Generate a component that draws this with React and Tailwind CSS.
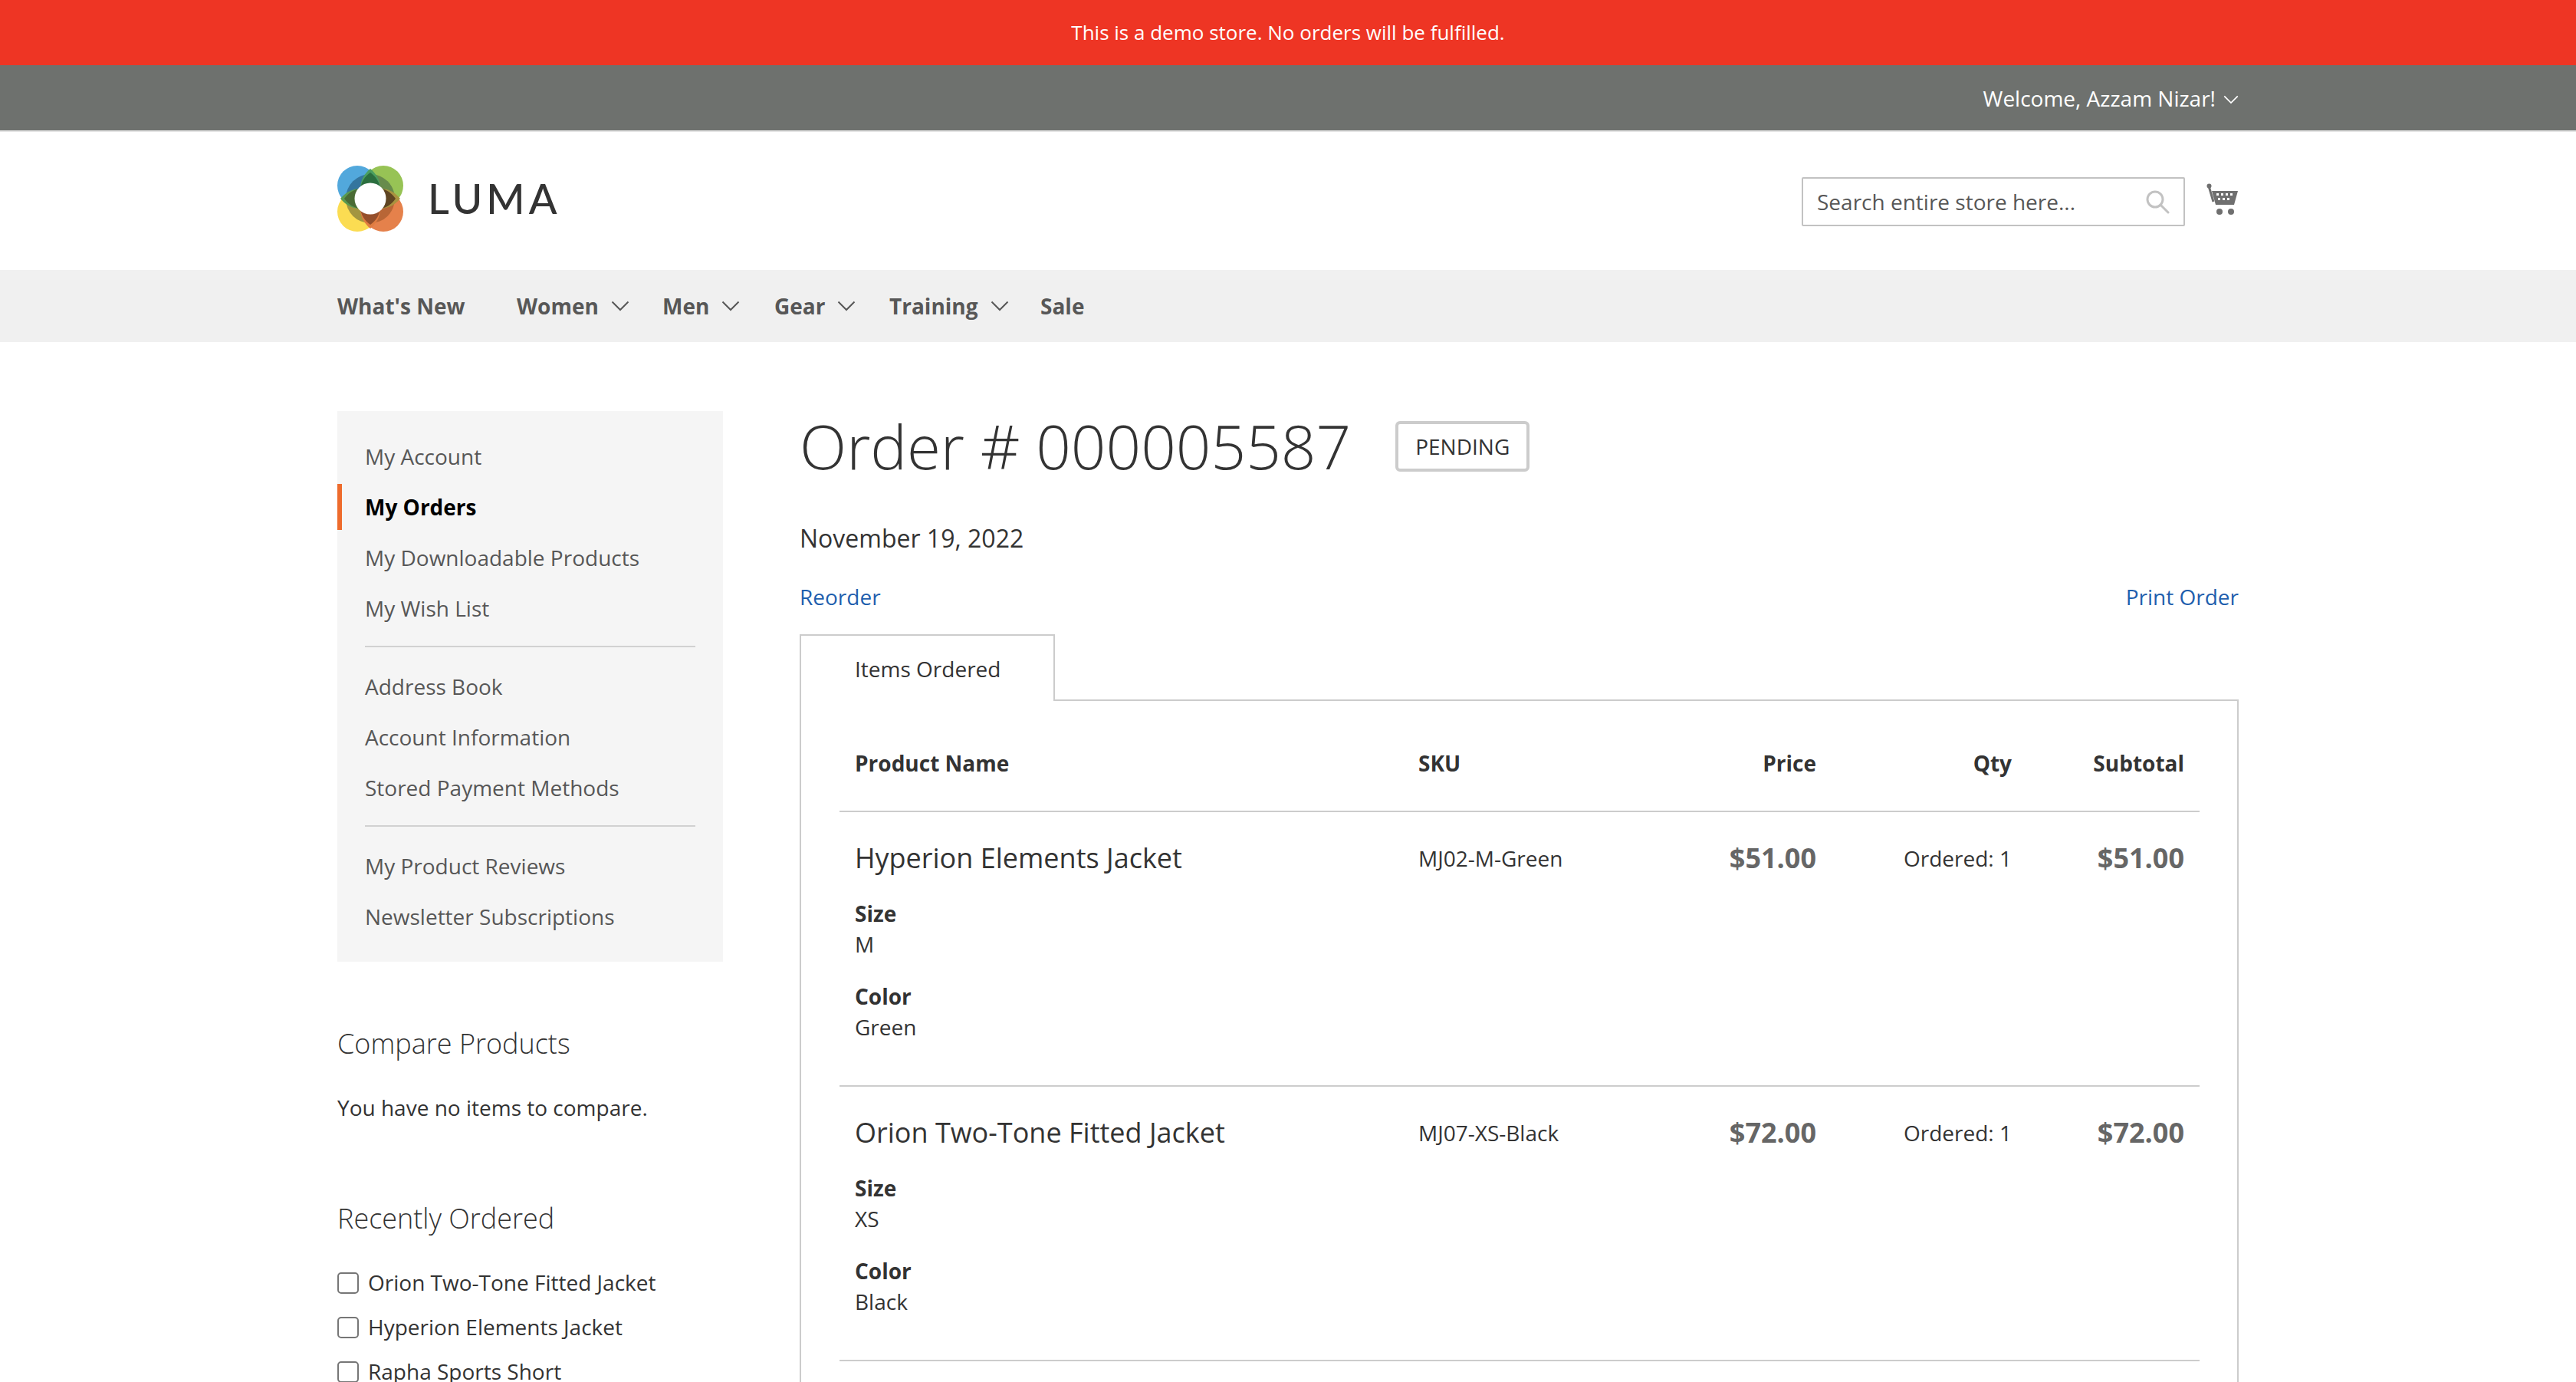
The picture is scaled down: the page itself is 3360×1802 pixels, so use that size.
import React from 'react';

const Chevron = ({ className, color = '#575757' }) => (
  <svg className={className} viewBox="0 0 24 14" fill="none" stroke={color} strokeWidth="2">
    <path d="M1.5 1.5 12 12 22.5 1.5" />
  </svg>
);

const Logo = () => (
  <svg className="w-[86px] h-[86px] shrink-0" viewBox="0 0 86 86">
    <circle cx="26" cy="26" r="26" fill="#52a8dc" />
    <circle cx="60" cy="26" r="26" fill="#97c355" />
    <circle cx="26" cy="60" r="26" fill="#fbdc52" />
    <circle cx="60" cy="60" r="26" fill="#e5814b" />
    <path d="M43 43V11A32 32 0 0 0 11 43Z" fill="#34759e" />
    <path d="M43 43V11A32 32 0 0 1 75 43Z" fill="#678b4c" />
    <path d="M43 43V75A32 32 0 0 1 11 43Z" fill="#a39540" />
    <path d="M43 43V75A32 32 0 0 0 75 43Z" fill="#b86636" />
    <path d="M43 4C36 10 30 18 30 30L43 43 56 30C56 18 50 10 43 4Z" fill="#4a9e60" />
    <path d="M43 9C36 14 30 22 30 32L43 43 56 32C56 22 50 14 43 9Z" fill="#2b6e3f" />
    <path d="M82 43C76 36 68 30 56 30L43 43 56 56C68 56 76 50 82 43Z" fill="#a8923f" />
    <path d="M76 43C71 36 64 30 54 30L43 43 54 56C64 56 71 50 76 43Z" fill="#5f4522" />
    <path d="M43 82C36 76 30 68 30 56L43 43 56 56C56 68 50 76 43 82Z" fill="#e07c40" />
    <path d="M43 77C36 72 30 64 30 54L43 43 56 54C56 64 50 72 43 77Z" fill="#954f2b" />
    <path d="M4 43C10 36 18 30 30 30L43 43 30 56C18 56 10 50 4 43Z" fill="#5a9a50" />
    <path d="M9 43C14 36 22 30 32 30L43 43 32 56C22 56 14 50 9 43Z" fill="#4a6b35" />
    <circle cx="43" cy="43" r="20.5" fill="#fff" />
  </svg>
);

const CartIcon = () => (
  <svg className="w-[42px] h-[42px]" viewBox="0 0 42 42" fill="#6f6f6f">
    <circle cx="3.5" cy="3.5" r="3" />
    <path d="M3 3.5 9 24" stroke="#6f6f6f" strokeWidth="3" fill="none" />
    <path fillRule="evenodd" d="M7 10H41L36 28H12ZM13 13v3h3v-3Zm6 0v3h3v-3Zm6 0v3h3v-3Zm6 0v3h3v-3ZM15 19v3h3v-3Zm6 0v3h3v-3Zm6 0v3h3v-3Z" />
    <circle cx="17" cy="37" r="4" />
    <circle cx="32" cy="37" r="4" />
  </svg>
);

const SearchIcon = () => (
  <svg className="w-[32px] h-[32px]" viewBox="0 0 32 32" fill="none" stroke="#c2c2c2" strokeWidth="3">
    <circle cx="13" cy="13" r="10" />
    <path d="M20 20 30 30" strokeLinecap="round" />
  </svg>
);

const NavItem = ({ label, width, arrow }) => (
  <div className={`flex items-center ${width}`}>
    <span>{label}</span>
    {arrow && <Chevron className="w-[24px] h-[14px] ml-4" />}
  </div>
);

const SideLink = ({ children, active }) => (
  <div className={active
    ? 'h-[60px] my-[3px] -ml-[36px] pl-[30px] border-l-[6px] border-[#ee6b2c] flex items-center font-bold text-black'
    : 'h-[66px] flex items-center'}>
    {children}
  </div>
);

const OptionBlock = ({ label, value }) => (
  <div className="mb-[28px]">
    <div className="font-bold h-[40px] leading-[40px]">{label}</div>
    <div className="h-[40px] leading-[40px]">{value}</div>
  </div>
);

const OrderRow = ({ name, sku, price, size, color }) => (
  <tr className="border-b-[2px] border-[#cccccc] align-top">
    <td className="pl-[20px] pt-[30px] pb-[28px]">
      <div className="text-[36px] leading-[60px] mb-[22px] h-[60px]">{name}</div>
      <OptionBlock label="Size" value={size} />
      <OptionBlock label="Color" value={color} />
    </td>
    <td className="pt-[30px] leading-[60px]">{sku}</td>
    <td className="pt-[30px] text-right text-[36px] font-bold text-[#666666] leading-[60px]">{price}</td>
    <td className="pt-[30px] text-right leading-[60px]">Ordered: 1</td>
    <td className="pt-[30px] pr-[20px] text-right text-[36px] font-bold text-[#666666] leading-[60px]">{price}</td>
  </tr>
);

export default function App() {
  return (
    <div className="h-[1802px] overflow-hidden bg-white text-[#333333] text-[28px] font-['Open_Sans',sans-serif]">
      <div className="h-[85px] bg-[#ee3524] text-white text-[26px] flex items-center justify-center">
        This is a demo store. No orders will be fulfilled.
      </div>
      <div className="h-[87px] bg-[#6e716e] border-b-[2px] border-[#e5e5e5] flex items-center justify-end px-[440px] text-white">
        <span>Welcome, Azzam Nizar!</span>
        <Chevron className="w-[20px] h-[12px] ml-[10px] mt-[4px]" color="#ffffff" />
      </div>

      <header className="h-[180px] flex items-center justify-between px-[440px]">
        <div className="flex items-center gap-[32px] -mt-[7px]">
          <Logo />
          <span className="font-['Lato',sans-serif] text-[54px] leading-none font-medium tracking-[5px] text-[#333333]">LUMA</span>
        </div>
        <div className="flex items-center gap-[28px] mt-[2px]">
          <div className="w-[500px] h-[64px] border-[2px] border-[#c2c2c2] rounded-[2px] flex items-center justify-between pl-[18px] pr-[18px] text-[#575757]">
            <span>Search entire store here...</span>
            <SearchIcon />
          </div>
          <div className="-mt-[6px]"><CartIcon /></div>
        </div>
      </header>

      <nav className="h-[94px] bg-[#f0f0f0] px-[440px] flex items-center font-bold text-[#575757]">
        <NavItem label="What's New" width="w-[234px]" />
        <NavItem label="Women" width="w-[190px]" arrow />
        <NavItem label="Men" width="w-[146px]" arrow />
        <NavItem label="Gear" width="w-[150px]" arrow />
        <NavItem label="Training" width="w-[197px]" arrow />
        <NavItem label="Sale" width="w-[80px]" />
      </nav>

      <div className="flex px-[440px] pt-[90px]">
        <aside className="w-[503px] shrink-0 mr-[100px]">
          <div className="bg-[#f5f5f5] pt-[26px] pb-[26px] px-[36px] text-[#575757]">
            <SideLink>My Account</SideLink>
            <SideLink active>My Orders</SideLink>
            <SideLink>My Downloadable Products</SideLink>
            <SideLink>My Wish List</SideLink>
            <div className="h-[2px] bg-[#d1d1d1] mt-[16px] mb-[18px]" />
            <SideLink>Address Book</SideLink>
            <SideLink>Account Information</SideLink>
            <SideLink>Stored Payment Methods</SideLink>
            <div className="h-[2px] bg-[#d1d1d1] mt-[16px] mb-[18px]" />
            <SideLink>My Product Reviews</SideLink>
            <SideLink>Newsletter Subscriptions</SideLink>
          </div>

          <div className="mt-[80px] text-[36px] font-light leading-[54px]">Compare Products</div>
          <div className="mt-[36px] leading-[40px]">You have no items to compare.</div>

          <div className="mt-[98px] text-[36px] font-light leading-[54px]">Recently Ordered</div>
          <div className="mt-[36px] flex flex-col gap-[18px]">
            {['Orion Two-Tone Fitted Jacket', 'Hyperion Elements Jacket', 'Rapha Sports Short'].map((item) => (
              <label key={item} className="flex items-center gap-[12px] h-[40px]">
                <span className="w-[28px] h-[28px] border-[2px] border-[#767676] rounded-[5px] bg-white shrink-0 mt-[2px]" />
                {item}
              </label>
            ))}
          </div>
        </aside>

        <main className="flex-1 min-w-0">
          <div className="flex items-center gap-[58px] h-[90px]">
            <h1 className="text-[80px] font-light leading-none">Order # 000005587</h1>
            <span className="h-[66px] px-[22px] border-[4px] border-[#cccccc] rounded-[6px] flex items-center text-[28px] mt-[2px]">PENDING</span>
          </div>
          <div className="mt-[54px] text-[32px] leading-[44px]">November 19, 2022</div>
          <div className="mt-[32px] flex justify-between text-[#1f5fae] leading-[44px]">
            <span>Reorder</span>
            <span>Print Order</span>
          </div>

          <div className="mt-[27px] relative z-10 w-[333px] h-[87px] border-[2px] border-b-0 border-[#cccccc] bg-white pl-[70px] flex items-center">
            Items Ordered
          </div>
          <div className="-mt-[2px] border-[2px] border-[#cccccc] px-[50px] pt-[60px]">
            <table className="w-full table-fixed border-collapse">
              <colgroup>
                <col className="w-[755px]" />
                <col className="w-[300px]" />
                <col className="w-[219px]" />
                <col className="w-[255px]" />
                <col className="w-[245px]" />
              </colgroup>
              <thead>
                <tr className="border-b-[2px] border-[#cccccc] font-bold text-left h-[84px] align-top">
                  <th className="pl-[20px] pt-[0px] font-bold">Product Name</th>
                  <th className="font-bold">SKU</th>
                  <th className="text-right font-bold">Price</th>
                  <th className="text-right font-bold">Qty</th>
                  <th className="pr-[20px] text-right font-bold">Subtotal</th>
                </tr>
              </thead>
              <tbody>
                <OrderRow name="Hyperion Elements Jacket" sku="MJ02-M-Green" price="$51.00" size="M" color="Green" />
                <OrderRow name="Orion Two-Tone Fitted Jacket" sku="MJ07-XS-Black" price="$72.00" size="XS" color="Black" />
                <OrderRow name="Rapha Sports Short" sku="MSH07-36-Blue" price="$35.00" size="36" color="Blue" />
              </tbody>
            </table>
          </div>
        </main>
      </div>
    </div>
  );
}
